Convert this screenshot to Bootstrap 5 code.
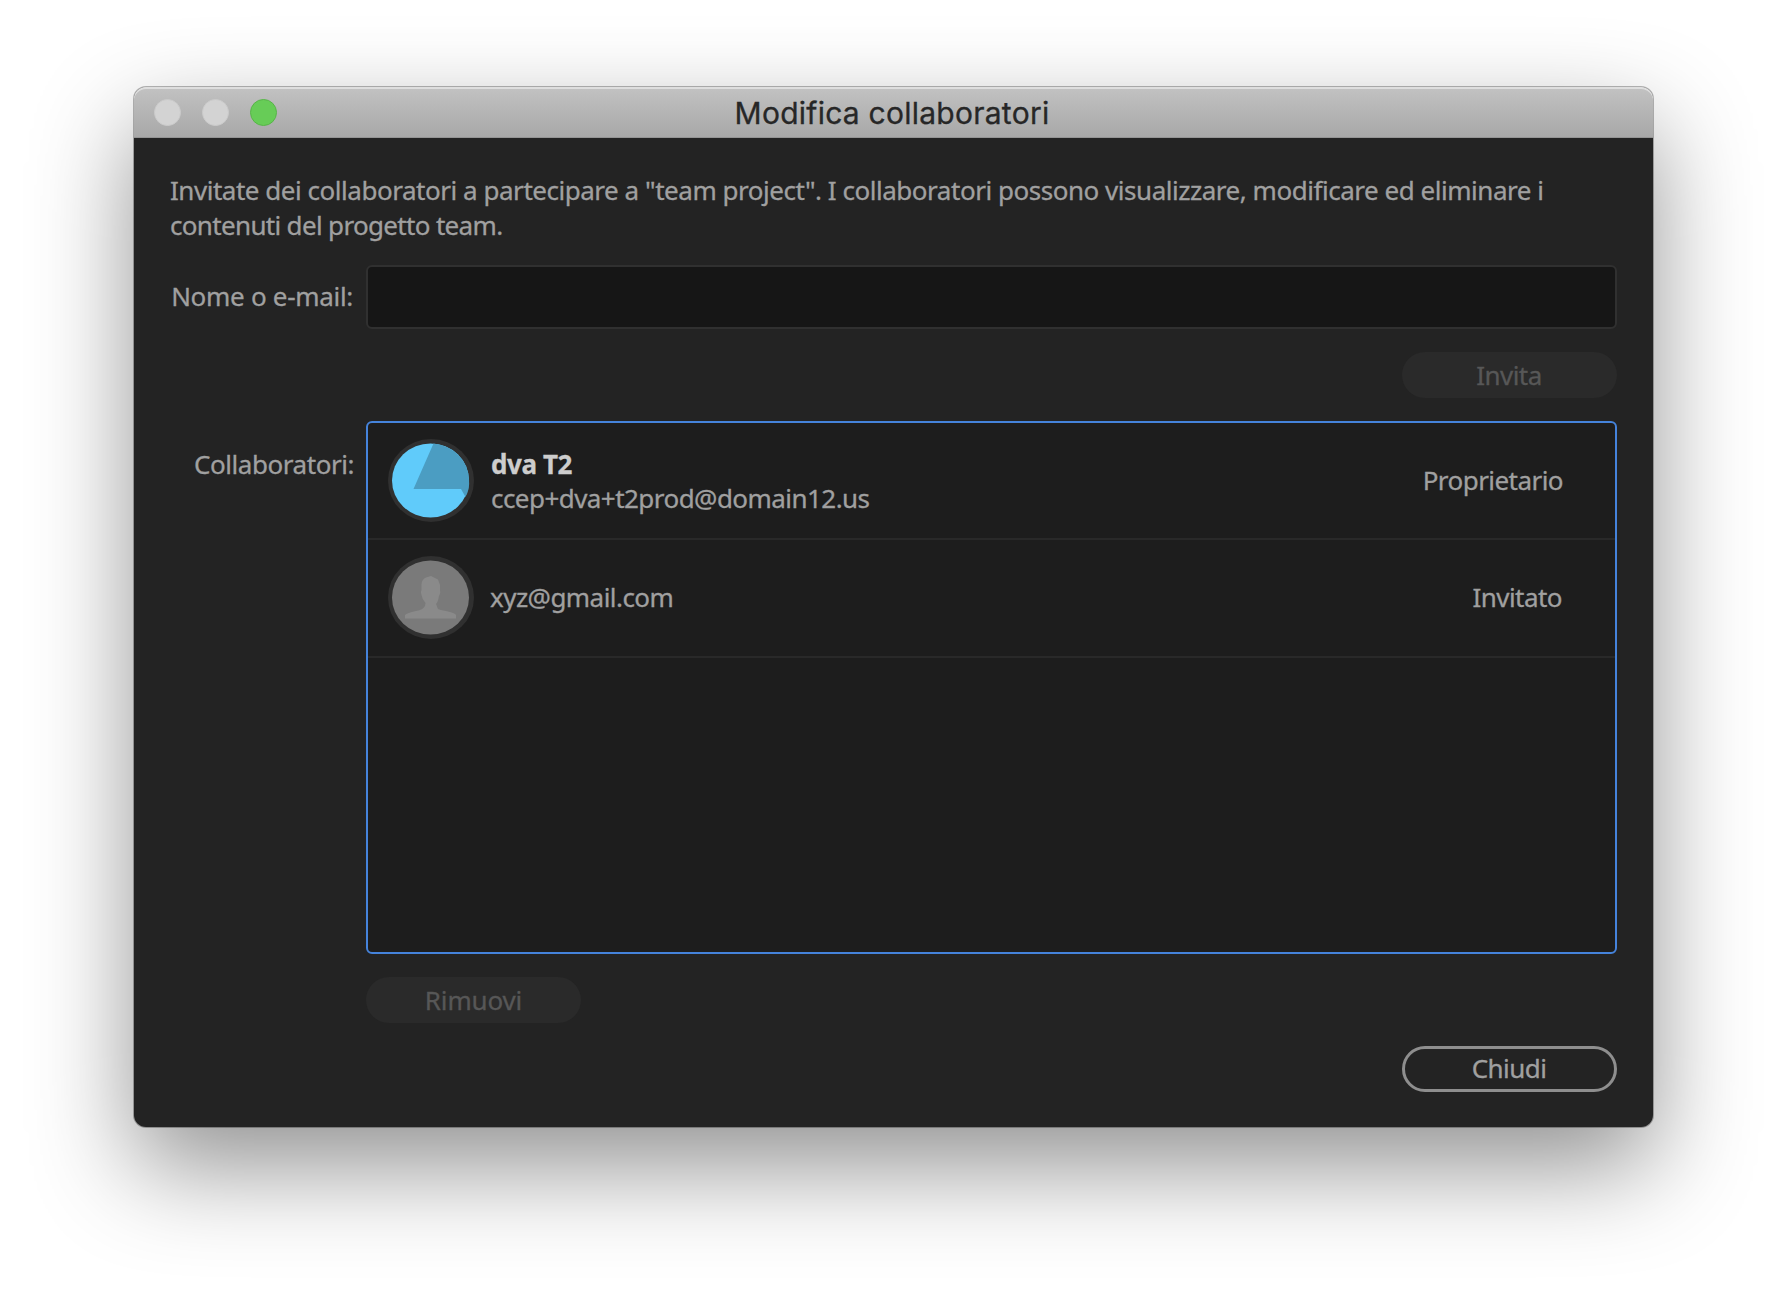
<!DOCTYPE html>
<html lang="it">
<head>
<meta charset="utf-8">
<meta name="viewport" content="width=device-width, initial-scale=1">
<title>Modifica collaboratori</title>
<link href="https://cdn.jsdelivr.net/npm/bootstrap@5.3.0/dist/css/bootstrap.min.css" rel="stylesheet">
<style>
body{background:#fff;height:1297px;overflow:hidden;padding:87px 0 0 134px;font-family:"Noto Sans",sans-serif;font-size:26px;line-height:35px;color:#a0a0a0;-webkit-text-stroke:.3px}
.dialog-window{width:1519px;height:1040px;border-radius:12px;background:#232323;box-shadow:0 0 0 1px rgba(0,0,0,.28),0 40px 100px rgba(0,0,0,.43)}
.titlebar{height:51px;border-radius:12px 12px 0 0;background:linear-gradient(#c2c2c2,#a8a8a8);border-bottom:1px solid #949494;box-shadow:inset 0 2px 0 #dedede;padding:0 20px}
.titlebar h1{font:400 30px/50px Inter,sans-serif;color:#272727;letter-spacing:.25px;padding:2px 3px 0 0}
.light{width:27px;height:27px;border-radius:50%;background:#d3d3d3;border:1px solid #cbcbcb}
.light-on{background:#67cc57;border-color:#57b548}
.lights{gap:21px;width:180px}
.dialog-content{padding:35px 36px 0}
.tx{white-space:nowrap;display:inline-block}
.intro{height:92px}
.intro-first{letter-spacing:-.47px}
.intro-second{letter-spacing:-.67px}
.form-row{gap:12px}
.lbl{width:184px;text-align:right;flex:none}
.lbl-email{letter-spacing:-.3px;padding:0 1px 2px 0}
.lbl-people{letter-spacing:-.45px;padding-top:26px}
.email-field.form-control{height:64px;background:#161616;border:2px solid #303030;border-radius:6px;color:#a0a0a0;font-size:26px}
.invite-row{padding:23px 0}
.pill.btn{width:215px;height:46px;border-radius:23px;border:0;padding:0 1px 1px 0;background:#2a2a2a;color:#575757;font-size:26px;line-height:44px;opacity:1;letter-spacing:-.55px}
.pill-remove.btn{letter-spacing:-.15px;line-height:46px;margin-top:23px;padding:0}
.pill-outline.btn{background:transparent;border:3px solid #8e8e8e;color:#a0a0a0;line-height:39px}
.close-row{padding-top:23px}
.people{height:533px;background:#1d1d1d;border:2px solid #4583db;border-radius:6px}
.person{height:117px;border-bottom:2px solid #292929;padding:0 52px 0 20px;letter-spacing:-.55px}
.person + .person{height:118px;padding:0 53px 2px 20px}
.person svg{flex:none;margin-right:17px}
.person + .person svg{margin-right:16px}
.person-name{color:#cdcdcd;font-weight:700;letter-spacing:-.4px;padding-top:1px;line-height:34px}
</style>
</head>
<body>
<main class="dialog-window">
  <header class="titlebar d-flex align-items-center justify-content-between">
    <div class="lights d-flex"><span class="light"></span><span class="light"></span><span class="light light-on"></span></div>
    <h1 class="m-0"><span class="tx">Modifica collaboratori</span></h1>
    <div class="lights"></div>
  </header>
  <section class="dialog-content">
    <p class="intro m-0"><span class="tx intro-first">Invitate dei collaboratori a partecipare a "team project". I collaboratori possono visualizzare, modificare ed eliminare i</span><br><span class="tx intro-second">contenuti del progetto team.</span></p>
    <div class="form-row d-flex align-items-center">
      <label class="lbl lbl-email" for="email"><span class="tx">Nome o e-mail:</span></label>
      <input class="form-control email-field" id="email" type="text">
    </div>
    <div class="invite-row d-flex justify-content-end"><button class="btn pill" disabled><span class="tx">Invita</span></button></div>
    <div class="form-row d-flex">
      <div class="lbl lbl-people"><span class="tx">Collaboratori:</span></div>
      <div class="flex-grow-1">
        <div class="people">
          <div class="person d-flex align-items-center">
            <svg width="86" height="83" viewBox="0 0 86 83"><ellipse cx="43" cy="41.500" rx="43" ry="41.500" fill="#303030"/><ellipse cx="42.500" cy="41.500" rx="38.500" ry="37" fill="#60cbfa"/><path d="M45.500 4.600L25.500 50H73L77.500 58Q82 50 81 41A38.500 37 0 0 0 45.500 4.600Z" fill="#4b9dc2"/></svg>
            <div class="flex-grow-1"><div class="person-name"><span class="tx">dva T2</span></div><div><span class="tx">ccep+dva+t2prod@domain12.us</span></div></div>
            <span class="tx">Proprietario</span>
          </div>
          <div class="person d-flex align-items-center">
            <svg width="86" height="83" viewBox="0 0 86 83"><ellipse cx="43" cy="41.500" rx="43" ry="41.500" fill="#303030"/><ellipse cx="42.500" cy="41.500" rx="38.500" ry="37" fill="#7a7a7a"/><path d="M43 20L50 23.500L52 29V34Q53 37 51 40Q50 46 48 48L50 53Q52 54 58 55Q67 57 68 59V62.500H17V59Q19 57 28 55Q35 54 37 50L37.500 47Q34 43 33.500 39Q32 36 33.500 34V28Q34 23 38 21.500Z" fill="#8a8a8a"/></svg>
            <div class="flex-grow-1"><span class="tx">xyz@gmail.com</span></div>
            <span class="tx">Invitato</span>
          </div>
        </div>
        <button class="btn pill pill-remove d-block" disabled><span class="tx">Rimuovi</span></button>
      </div>
    </div>
    <div class="close-row d-flex justify-content-end"><button class="btn pill pill-outline" type="button"><span class="tx">Chiudi</span></button></div>
  </section>
</main>
<script src="https://cdn.jsdelivr.net/npm/bootstrap@5.3.0/dist/js/bootstrap.bundle.min.js"></script>
</body>
</html>
